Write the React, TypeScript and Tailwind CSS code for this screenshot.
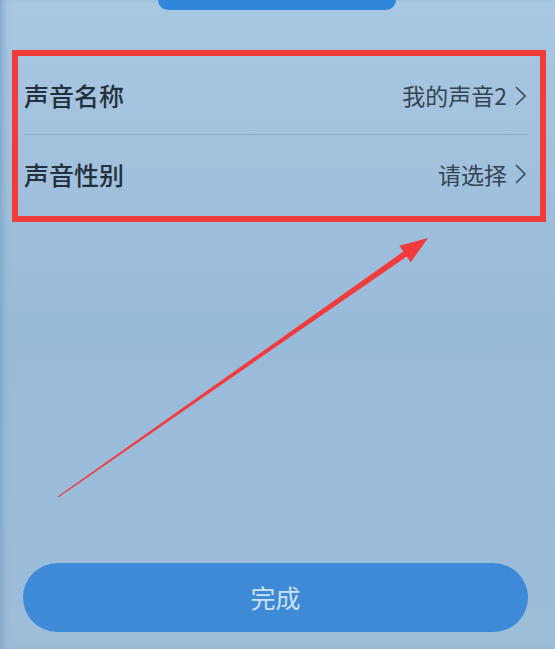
import React from 'react';

const cjk = { fontFamily: '"Noto Sans CJK SC", "Noto Sans", sans-serif' };

function Chevron() {
  return (
    <svg width="16" height="24" viewBox="0 0 16 24" className="ml-[5px]">
      <polyline points="4,3 13,12 4,21" fill="none" stroke="#3d4a58" strokeWidth="1.6" />
    </svg>
  );
}

interface RowProps {
  label: string;
  value: string;
  divider?: boolean;
}

function Row({ label, value, divider }: RowProps) {
  return (
    <div className={`flex items-center justify-between h-[78px] ${divider ? 'border-b border-[#8eaac3]' : ''}`}>
      <span className="text-[25px] font-medium text-[#24303b] leading-none">{label}</span>
      <span className="flex items-center text-[23px] text-[#364452] leading-none">
        {value}
        <Chevron />
      </span>
    </div>
  );
}

export default function App() {
  return (
    <div
      className="relative w-[555px] h-[649px] overflow-hidden flex flex-col bg-gradient-to-b from-[#a9c7e1] via-[#99bbda] to-[#9dbdd9] shadow-[inset_6px_0_6px_-3px_#7ea6c8]"
      style={cjk}
    >
      {/* top button edge */}
      <div className="ml-[158px] w-[238px] h-[10px] rounded-b-[10px] bg-[#2f86da]" />

      {/* highlighted rows */}
      <div className="mt-[40px] ml-[12px] w-[534px] h-[172px] border-[6px] border-[#f23b3b] pl-[6px] pr-[12px] pt-[1px]">
        <Row label="声音名称" value="我的声音2" divider />
        <Row label="声音性别" value="请选择" />
      </div>

      {/* done button */}
      <div className="mt-auto mb-[17px] ml-[23px] w-[505px] h-[69px] rounded-full bg-[#3e8ad6] flex items-center justify-center">
        <span className="text-[25px] text-[#cfe2f3] leading-none">完成</span>
      </div>

      {/* annotation arrow */}
      <svg className="absolute inset-0 pointer-events-none" width="555" height="649" viewBox="0 0 555 649">
        <polygon
          points="57.7,496.6 403.4,251.5 399.4,245.8 428,238 410.8,262.2 406.8,256.5 58.3,497.4"
          fill="#f23b3b"
        />
      </svg>
    </div>
  );
}
